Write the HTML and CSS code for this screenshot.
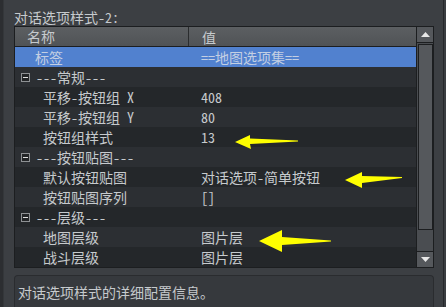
FILE: index.html
```html
<!DOCTYPE html>
<html lang="zh">
<head>
    <meta charset="UTF-8">
    <meta name="viewport" content="width=device-width, initial-scale=1.0">
    <title>对话选项样式</title>
    <link rel="stylesheet" href="styles.css">
</head>
<body>

    <div class="panel">
        <div class="edge-left"></div>

        <div class="main">
            <div class="title">对话选项样式-2:</div>

            <!-- 属性表 -->
            <div class="grid-box">
                <div class="tree">
                    <div class="head">
                        <div class="c-name">名称</div>
                        <div class="c-val">值</div>
                    </div>
                    <div class="row sel odd">
                        <div class="c-name lv1">标签</div>
                        <div class="c-val">==地图选项集==</div>
                    </div>
                    <div class="row group">
                        <div class="c-name"><span class="toggle"></span>---常规---</div>
                        <div class="c-val"></div>
                    </div>
                    <div class="row odd">
                        <div class="c-name lv2">平移-按钮组 X</div>
                        <div class="c-val">408</div>
                    </div>
                    <div class="row">
                        <div class="c-name lv2">平移-按钮组 Y</div>
                        <div class="c-val">80</div>
                    </div>
                    <div class="row odd">
                        <div class="c-name lv2">按钮组样式</div>
                        <div class="c-val">13</div>
                    </div>
                    <div class="row group">
                        <div class="c-name"><span class="toggle"></span>---按钮贴图---</div>
                        <div class="c-val"></div>
                    </div>
                    <div class="row odd">
                        <div class="c-name lv2">默认按钮贴图</div>
                        <div class="c-val">对话选项-简单按钮</div>
                    </div>
                    <div class="row">
                        <div class="c-name lv2">按钮贴图序列</div>
                        <div class="c-val">[]</div>
                    </div>
                    <div class="row group odd">
                        <div class="c-name"><span class="toggle"></span>---层级---</div>
                        <div class="c-val"></div>
                    </div>
                    <div class="row">
                        <div class="c-name lv2">地图层级</div>
                        <div class="c-val">图片层</div>
                    </div>
                    <div class="row odd">
                        <div class="c-name lv2">战斗层级</div>
                        <div class="c-val">图片层</div>
                    </div>
                </div>

                <!-- 滚动条 -->
                <div class="scrollbar">
                    <div class="sb-btn">
                        <svg width="9" height="5" viewBox="0 0 9 5"><polygon points="4.5,0 9,5 0,5" fill="#e8e8e8"/></svg>
                    </div>
                    <div class="sb-track">
                        <div class="sb-handle"></div>
                    </div>
                    <div class="sb-btn down">
                        <svg width="9" height="5" viewBox="0 0 9 5"><polygon points="0,0 9,0 4.5,5" fill="#e8e8e8"/></svg>
                    </div>
                </div>
            </div>

            <div class="desc">对话选项样式的详细配置信息。</div>
        </div>

        <div class="edge-right"></div>

        <!-- 黄色标注箭头 -->
        <svg class="marks" width="446" height="307" viewBox="0 0 446 307">
            <polygon fill="#ffff00" points="235,142 250,135 250,138.5 298,140.5 298,141.5 250,144 251,149"/>
            <polygon fill="#ffff00" points="345,180 362,172 362,176 402,177 402,178 362,183 362,188"/>
            <polygon fill="#ffff00" points="259,241 282,230 282,237 331,240.5 331,241.5 282,245 282,252"/>
        </svg>
    </div>

</body>
</html>
```

FILE: styles.css
```css
body {
    margin: 0;
    background: #3c3f43;
    font-family: "Noto Sans Mono CJK SC", "DejaVu Sans Mono", "Noto Sans CJK SC", monospace;
    font-size: 14px;
    color: #c6cacd;
}
.panel {
    position: relative;
    display: flex;
    width: 446px;
    height: 307px;
    overflow: hidden;
}
.edge-left {
    width: 3px;
    background: #2c2e31;
    border-right: 1px solid #34373a;
}
.edge-right {
    width: 2px;
    margin-left: 9px;
    border-left: 1px solid #26282b;
    background: #3a3d41;
}
.main {
    flex: 1;
    display: flex;
    flex-direction: column;
    padding-left: 10px;
}
.title {
    height: 26px;
    line-height: 24px;
    padding-top: 5px;
    box-sizing: border-box;
    white-space: nowrap;
}
/* 属性表 */
.grid-box {
    display: flex;
    width: 418px;
    height: 240px;
    border: 1px solid #1c1e20;
}
.tree {
    width: 401px;
    border-right: 1px solid #1c1e20;
    background: #2c2f33;
}
.head, .row {
    display: flex;
    height: 20px;
    line-height: 20px;
    white-space: nowrap;
}
.head {
    height: 19px;
    line-height: 21px;
    border-bottom: 1px solid #1c1e20;
    background: linear-gradient(#5c5f62, #505356);
}
.head .c-name {
    width: 161px;
    padding-left: 12px;
    border-right: 1px solid #2a2c2e;
}
.head .c-val {
    padding-left: 13px;
}
.c-name {
    width: 174px;
    display: flex;
    align-items: center;
}
.c-val {
    padding-left: 12px;
}
.row.odd {
    background: #24272a;
}
.row.sel {
    background: #5181cf;
    color: #c3cfe3;
}
.lv1 { padding-left: 20px; width: 154px; }
.lv2 { padding-left: 28px; width: 146px; }
.group .c-name {
    padding-left: 6px;
    width: 168px;
}
.toggle {
    position: relative;
    width: 7px;
    height: 7px;
    margin-right: 6px;
    border: 1px solid #8e9194;
    background: #232527;
}
.toggle::after {
    content: "";
    position: absolute;
    left: 1px;
    top: 3px;
    width: 5px;
    height: 1px;
    background: #e0e0e0;
}
/* 滚动条 */
.scrollbar {
    width: 16px;
    display: flex;
    flex-direction: column;
    background: #4a4d51;
}
.sb-btn {
    height: 15px;
    border-bottom: 1px solid #1c1e20;
    background: #55585c;
    display: flex;
    justify-content: center;
    align-items: center;
}
.sb-btn.down {
    border-bottom: none;
    border-top: 1px solid #1c1e20;
}
.sb-track {
    flex: 1;
    padding: 1px 0 0 1px;
}
.sb-handle {
    height: 184px;
    border: 1px solid #1c1e20;
    background: #55585c;
}
.desc {
    margin-top: 7px;
    width: 420px;
    flex: 1;
    box-sizing: border-box;
    padding: 6px 0 0 3px;
    border: 1px solid #2a2c2f;
    border-bottom: none;
    border-radius: 4px 4px 0 0;
    background: #36393d;
    white-space: nowrap;
}
.marks {
    position: absolute;
    left: 0;
    top: 0;
}
```
